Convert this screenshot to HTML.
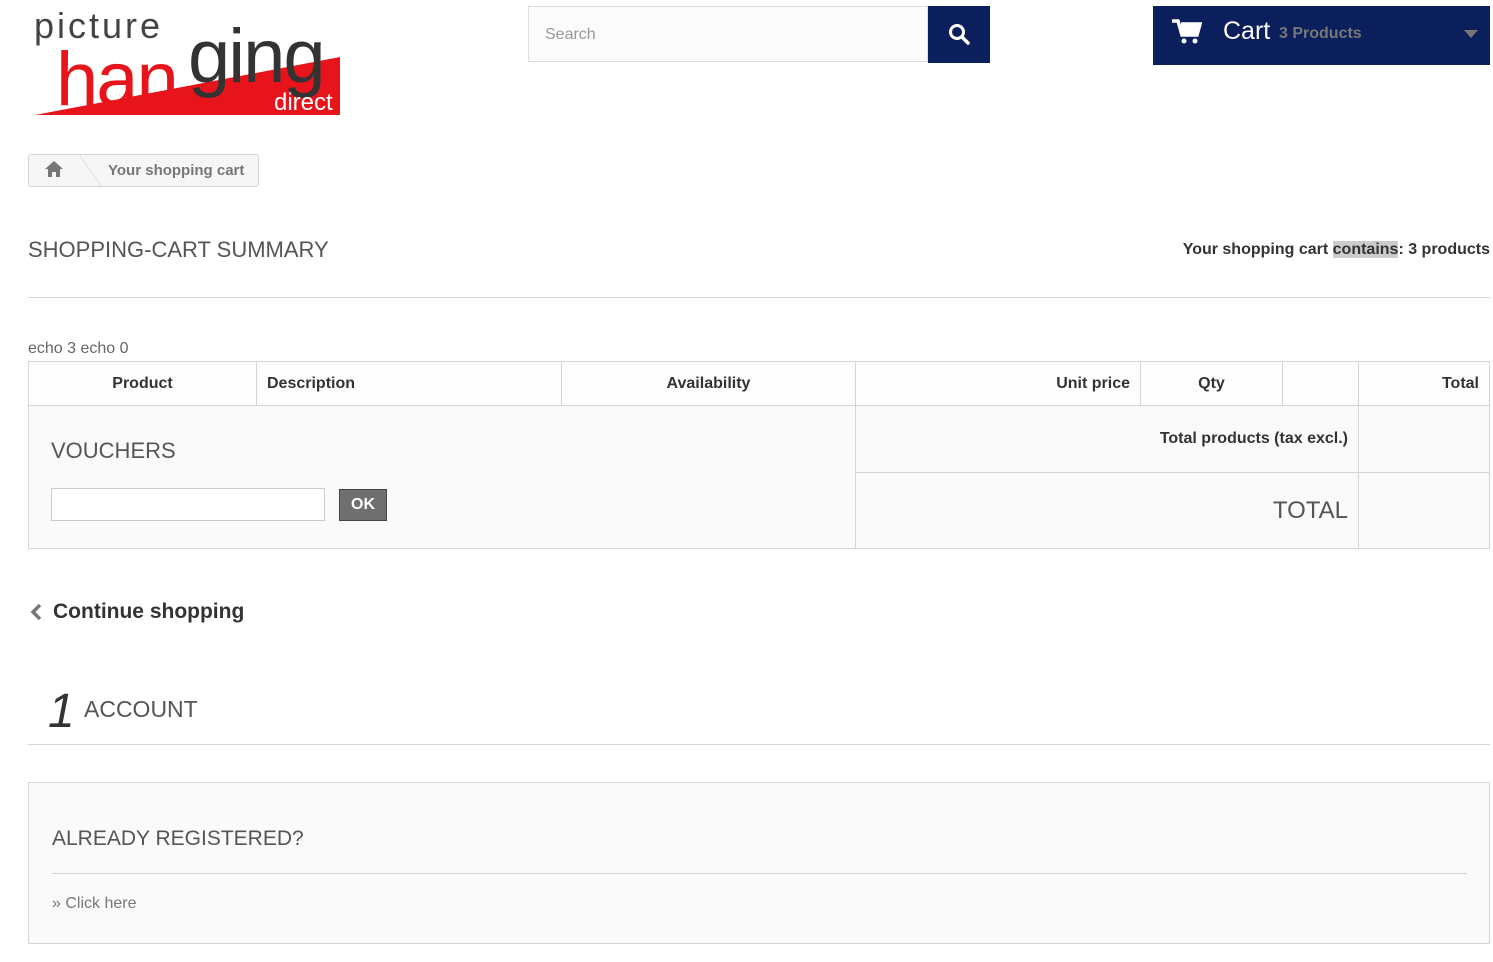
<!DOCTYPE html>
<html><head><style>
body{margin:0;background:#fff;font-family:"Liberation Sans",Arial,sans-serif;color:#333;width:1493px;height:962px;overflow:hidden;position:relative}
.a{position:absolute}
th,td{border:1px solid #d6d4d4;padding:0}
</style></head><body>
<svg class="a" style="left:20px;top:0" width="340" height="125">
<polygon points="15,115 320,115 320,57" fill="#e8141b"/>
<text x="14" y="38" font-family="Liberation Sans" font-size="36" fill="#444" letter-spacing="3">picture</text>
<text x="36" y="105" font-family="Liberation Sans" font-size="76" fill="#e8141b" letter-spacing="-2">han</text>
<text x="168" y="82" font-family="Liberation Sans" font-size="76" fill="#333" letter-spacing="-2">ging</text>
<text x="254" y="110" font-family="Liberation Sans" font-size="24" fill="#fff">direct</text>
</svg>
<div class="a" style="left:528px;top:6px;width:400px;height:56px;border:1px solid #ddd;background:#fbfbfb;box-sizing:border-box;padding:19px 16px;font-size:16px;color:#999">Search</div>
<div class="a" style="left:928px;top:6px;width:62px;height:57px;background:#0a1f5c">
<svg style="margin:17px 0 0 20px" width="22" height="22" viewBox="0 0 22 22"><circle cx="9" cy="9" r="6.5" fill="none" stroke="#fff" stroke-width="3"/><line x1="14" y1="14" x2="20" y2="20" stroke="#fff" stroke-width="3.5" stroke-linecap="round"/></svg></div>
<div class="a" style="left:1153px;top:6px;width:337px;height:59px;background:#0a1f5c;color:#fff">
<svg class="a" style="left:19px;top:13px" width="30" height="26" viewBox="0 0 30 26"><path d="M0 2h6l4 14h15l3-11H9" fill="none" stroke="#fff" stroke-width="3.5"/><rect x="9" y="6" width="17" height="9" fill="#fff"/><circle cx="12" cy="22" r="2.5" fill="#fff"/><circle cx="23" cy="22" r="2.5" fill="#fff"/></svg>
<span class="a" style="left:70px;top:11px;font-size:25px">Cart</span>
<span class="a" style="left:126px;top:19px;font-size:16px;font-weight:bold;color:#777">3 Products</span>
<span class="a" style="left:311px;top:24px;width:0;height:0;border-left:7px solid transparent;border-right:7px solid transparent;border-top:8px solid #777"></span></div>
<div class="a" style="left:28px;top:154px;width:229px;height:31px;border:1px solid #d6d4d4;border-radius:3px;background:#f6f6f6"></div>
<svg class="a" style="left:44px;top:160px" width="20" height="18" viewBox="0 0 20 18"><path d="M10 1L1 9h3v8h4v-5h4v5h4V9h3z" fill="#777"/></svg>
<div class="a" style="left:78px;top:155px;width:1px;height:31px;border-right:1px solid #ddd;transform:skewX(35deg);transform-origin:top"></div>
<span class="a" style="left:108px;top:162px;font-size:15px;font-weight:bold;color:#777">Your shopping cart</span>
<div class="a" style="left:28px;top:237px;font-size:22px;color:#555">SHOPPING-CART SUMMARY</div>
<div class="a" style="right:3px;top:241px;font-size:16px;font-weight:bold;color:#333">Your shopping cart <span style="background:#ccc">contains</span>: 3 products</div>
<div class="a" style="left:28px;top:297px;width:1462px;border-top:1px solid #d6d4d4"></div>
<div class="a" style="left:28px;top:340px;font-size:16px;color:#666">echo 3 echo 0</div>
<table class="a" style="left:28px;top:361px;width:1462px;border-collapse:collapse;table-layout:fixed;font-size:16px;background:#fafafa">
<colgroup><col style="width:228px"><col style="width:305px"><col style="width:294px"><col style="width:285px"><col style="width:142px"><col style="width:76px"><col></colgroup>
<tr style="height:44px;font-weight:bold;background:#fdfdfd">
<th style="text-align:center">Product</th><th style="text-align:left;padding-left:10px">Description</th><th style="text-align:center">Availability</th><th style="text-align:right;padding-right:10px">Unit price</th><th style="text-align:center">Qty</th><th></th><th style="text-align:right;padding-right:10px">Total</th></tr>
<tr style="height:67px"><td colspan="3" rowspan="2" style="vertical-align:top;padding:32px 22px 0"><div style="font-size:22px;color:#555">VOUCHERS</div>
<div style="margin-top:24px;display:flex;align-items:center"><div style="width:272px;height:31px;border:1px solid #ccc;background:#fff"></div><div style="margin-left:14px;width:48px;height:32px;background:#6f6f6f;border:1px solid #444;color:#fff;font-weight:bold;text-align:center;line-height:30px;box-sizing:border-box">OK</div></div></td>
<td colspan="3" style="text-align:right;padding-right:10px;font-weight:bold">Total products (tax excl.)</td><td></td></tr>
<tr style="height:76px"><td colspan="3" style="text-align:right;padding-right:10px;font-size:24px;color:#555">TOTAL</td><td></td></tr>
</table>
<svg class="a" style="left:30px;top:603px" width="12" height="18" viewBox="0 0 12 18"><path d="M10 2L3 9l7 7" fill="none" stroke="#777" stroke-width="3.5"/></svg>
<div class="a" style="left:53px;top:600px;font-size:21px;font-weight:bold;color:#333">Continue shopping</div>
<div class="a" style="left:48px;top:684px;font-size:48px;font-style:italic;color:#333">1</div>
<div class="a" style="left:84px;top:696px;font-size:23px;color:#555">ACCOUNT</div>
<div class="a" style="left:28px;top:744px;width:1462px;border-top:1px solid #d6d4d4"></div>
<div class="a" style="left:28px;top:782px;width:1460px;height:160px;border:1px solid #d6d4d4;background:#fafafa">
<div class="a" style="left:23px;top:44px;font-size:21px;color:#555">ALREADY REGISTERED?</div>
<div class="a" style="left:23px;top:90px;width:1415px;border-top:1px solid #d6d4d4"></div>
<div class="a" style="left:23px;top:112px;font-size:16px;color:#777">» Click here</div></div>
</body></html>
